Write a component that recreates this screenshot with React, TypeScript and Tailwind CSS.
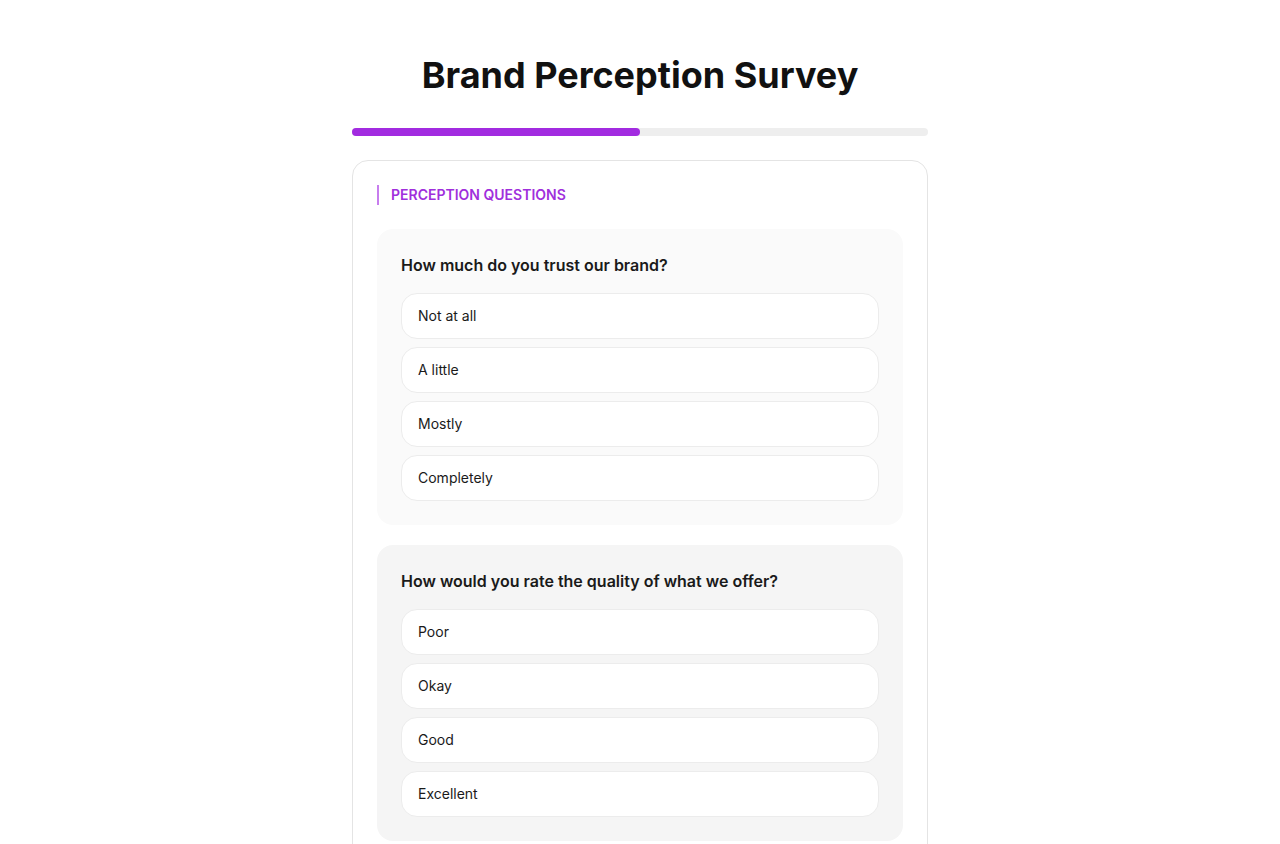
import React from "react";

const questions = [
  {
    q: "How much do you trust our brand?",
    opts: ["Not at all", "A little", "Mostly", "Completely"],
    bg: "bg-[#fafafa]",
  },
  {
    q: "How would you rate the quality of what we offer?",
    opts: ["Poor", "Okay", "Good", "Excellent"],
    bg: "bg-[#f5f5f5]",
  },
];

export default function App() {
  return (
    <div
      className="min-h-screen bg-white text-[#111111]"
      style={{ fontFamily: "Inter, 'Noto Sans', sans-serif" }}
    >
      <div className="mx-auto w-[576px] pt-[55px]">
        <h1 className="text-center text-[36px] leading-[40px] font-bold text-[#111111]">
          Brand Perception Survey
        </h1>
        <div className="mt-[33px] h-2 w-full rounded-full bg-[#eeeeee]">
          <div className="h-2 w-1/2 rounded-full bg-[#a22be0]" />
        </div>
        <div className="mt-6 rounded-2xl border border-[#e4e4e4] bg-white p-6">
          <div className="border-l-2 border-[#c77dee] pl-3 text-[14px] leading-5 font-semibold uppercase text-[#a02fdc]">
            Perception Questions
          </div>
          <div className="mt-6 flex flex-col gap-5">
            {questions.map((item) => (
              <div key={item.q} className={`rounded-2xl ${item.bg} p-6`}>
                <div className="text-[16px] leading-6 font-semibold text-[#1a1a1a]">
                  {item.q}
                </div>
                <div className="mt-4 flex flex-col gap-2">
                  {item.opts.map((o) => (
                    <div
                      key={o}
                      className="rounded-2xl border border-[#ececec] bg-white px-4 py-3 text-[14px] leading-5 text-[#1a1a1a]"
                    >
                      {o}
                    </div>
                  ))}
                </div>
              </div>
            ))}
          </div>
        </div>
      </div>
    </div>
  );
}
